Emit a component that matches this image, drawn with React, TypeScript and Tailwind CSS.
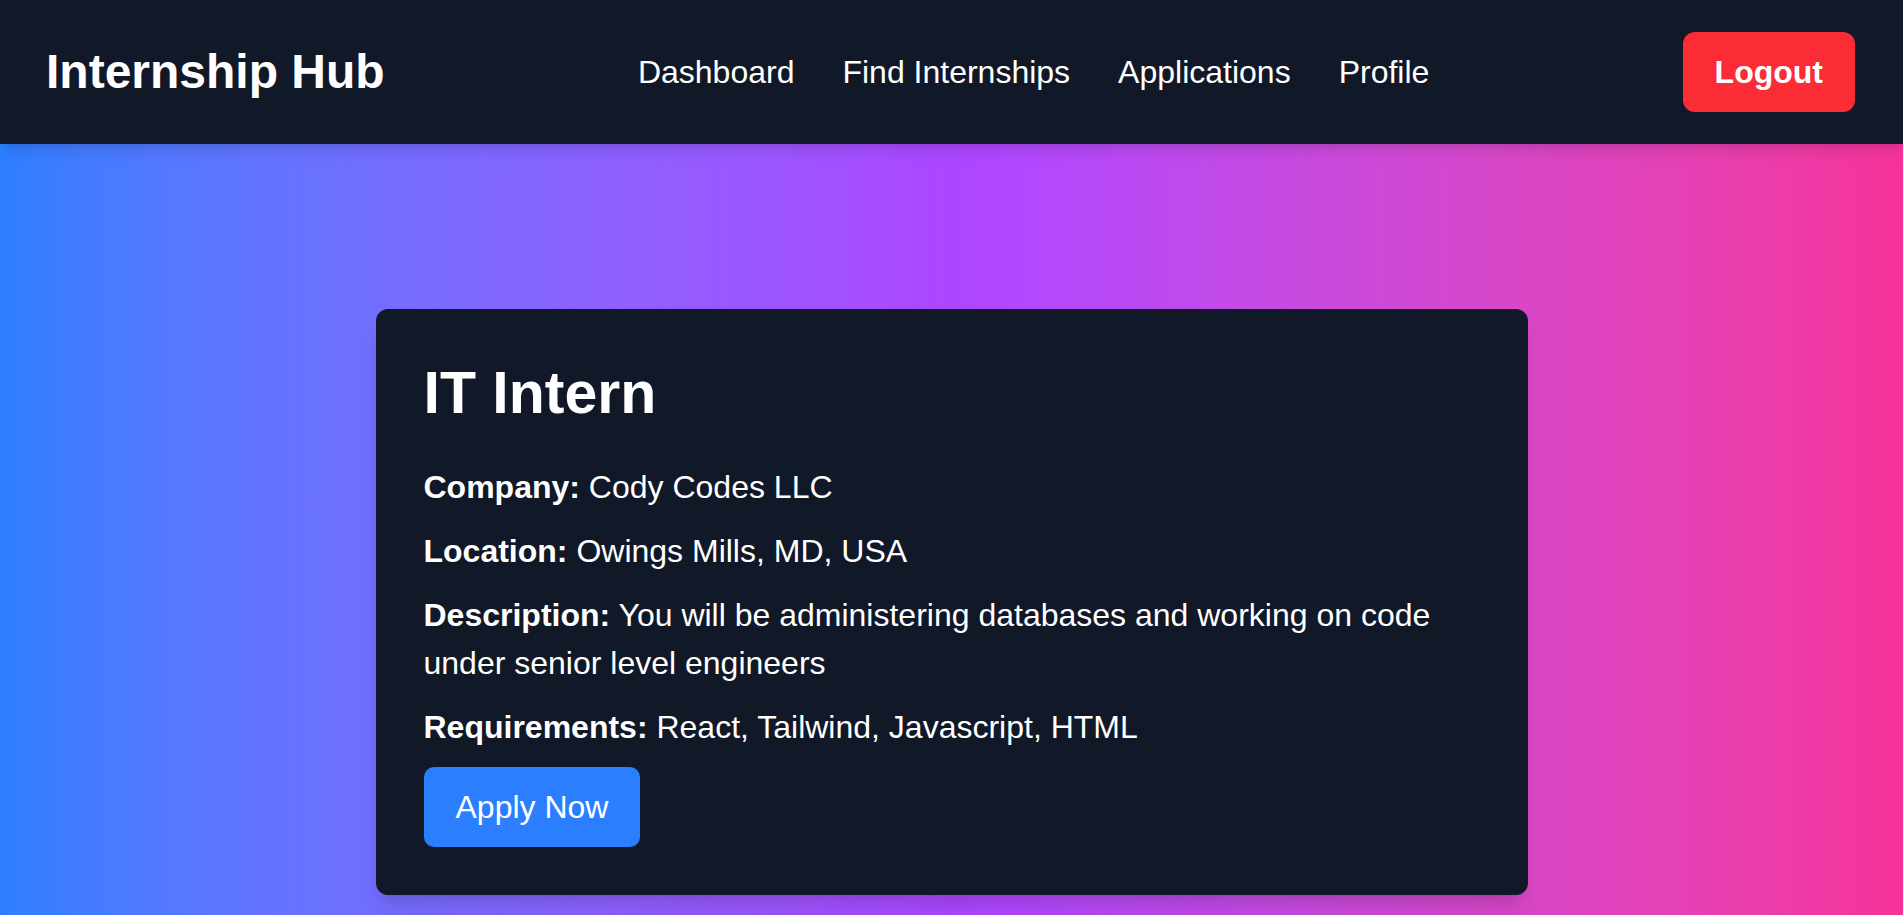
import React from 'react';

const internship = {
  title: 'IT Intern',
  company: 'Cody Codes LLC',
  location: 'Owings Mills, MD, USA',
  description: 'You will be administering databases and working on code under senior level engineers',
  requirements: 'React, Tailwind, Javascript, HTML',
};

const navLinks = ['Dashboard', 'Find Internships', 'Applications', 'Profile'];

export default function App() {
  return (
    <div className="min-h-screen font-['Liberation_Sans',Arial,sans-serif] text-white">
      {/* Top nav */}
      <header className="relative z-10 flex items-center justify-between bg-[#111827] py-8 pl-[46px] pr-12 shadow-lg">
        <h1 className="text-[48px] font-bold leading-[1.2]">Internship Hub</h1>
        <nav className="flex items-center gap-12">
          {navLinks.map((link) => (
            <a key={link} href="#" className="text-[32px] leading-[48px] text-white hover:text-gray-300">
              {link}
            </a>
          ))}
        </nav>
        <button className="rounded-xl bg-[#fb2c36] px-8 py-4 text-[32px] font-bold leading-[48px] text-white hover:bg-red-600">
          Logout
        </button>
      </header>

      {/* Listing */}
      <main className="flex min-h-screen items-center justify-center bg-linear-to-r from-blue-500 via-purple-500 to-pink-500 px-4">
        <div className="w-full max-w-[1152px] rounded-xl bg-[#111827] p-12 shadow-xl">
          <h2 className="mb-[34px] text-[59px] font-bold leading-[72px]">{internship.title}</h2>
          <div className="space-y-4 text-[32px] leading-[48px]">
            <p>
              <strong>Company:</strong> {internship.company}
            </p>
            <p>
              <strong>Location:</strong> {internship.location}
            </p>
            <p>
              <strong>Description:</strong> {internship.description}
            </p>
            <p>
              <strong>Requirements:</strong> {internship.requirements}
            </p>
          </div>
          <button className="mt-4 rounded-[10px] bg-blue-500 px-8 py-4 text-[32px] leading-[48px] text-white hover:bg-blue-600">
            Apply Now
          </button>
        </div>
      </main>
    </div>
  );
}
